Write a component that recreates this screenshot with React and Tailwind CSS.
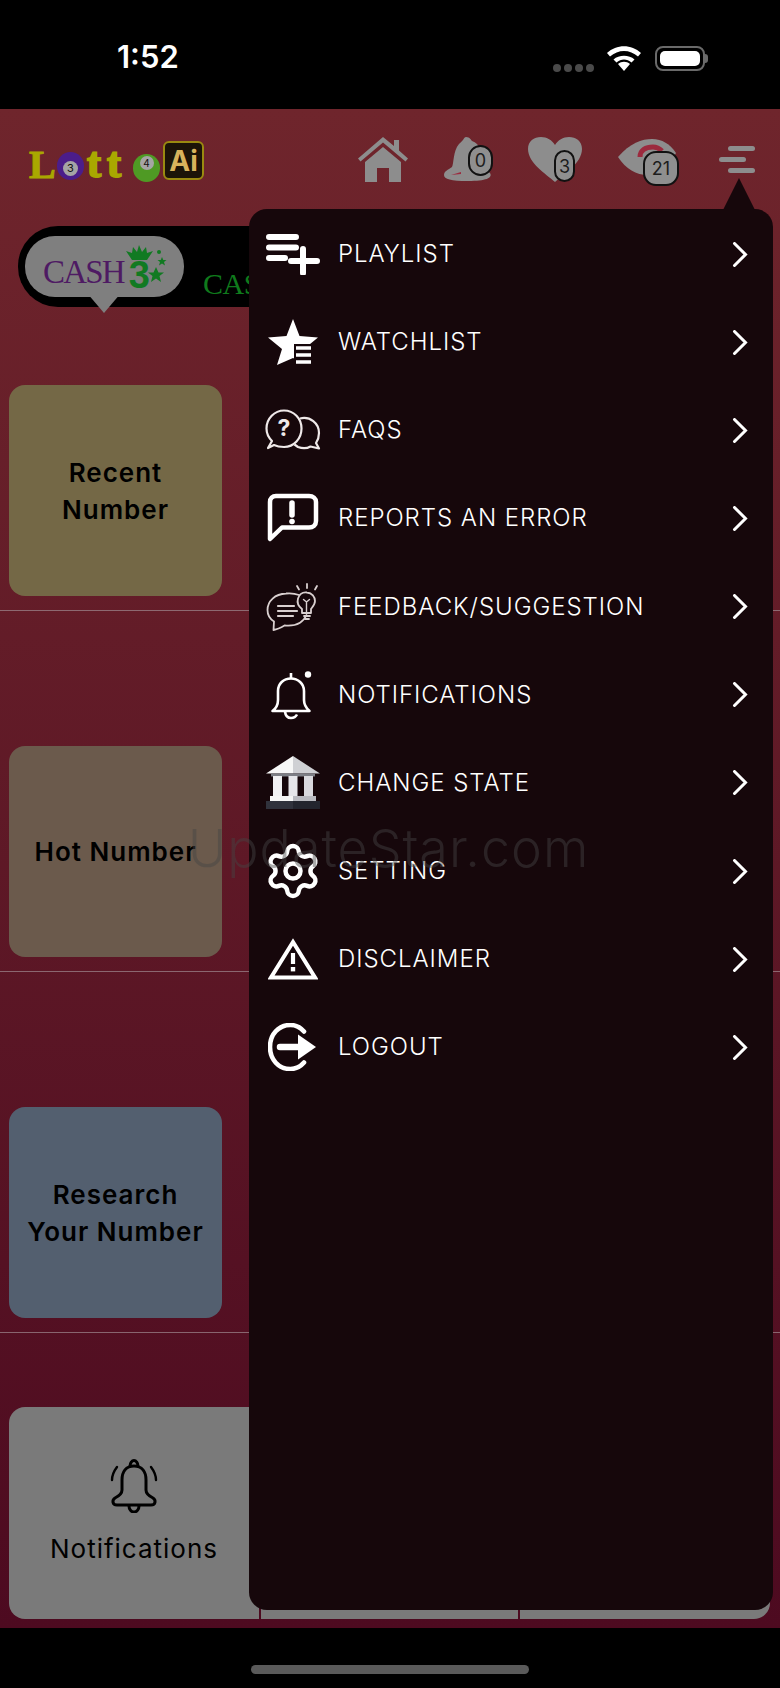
import { Settings } from "lucide-react";

const FONT = "font-['Inter','Noto_Sans',sans-serif]";

const PlaylistIcon = () => (
  <svg width="54" height="42" viewBox="0 0 54 42" fill="none" stroke="white" strokeLinecap="round">
    <path d="M3 4H30M3 14.500H30M3 25H19" strokeWidth="6" />
    <path d="M37 16V40M25 28H51" strokeWidth="6" />
  </svg>
);

const StarIcon = () => (
  <svg width="52" height="48" viewBox="0 0 52 48">
    <path d="M26 1L32.500 18L51 19.500L37 31L41 47L26 40L10 47L15 31L1 19.500L19.500 18Z" fill="white" />
    <rect x="27" y="26" width="25" height="22" fill="#16070b" />
    <path d="M29 30H44M29 37H44M29 44H44" stroke="white" strokeWidth="3.400" />
  </svg>
);

const FaqIcon = () => (
  <svg width="56" height="42" viewBox="0 0 56 42" fill="none" stroke="#efe9e9" strokeWidth="2.200" strokeLinejoin="round">
    <path d="M3 39L7 32C3 28 1.500 24 1.500 19.500C1.500 9.500 9.500 1.500 19 1.500C29 1.500 36.500 9.500 36.500 19.500C36.500 29.500 29 38 19 38C14 38 11 37 9 36Z" />
    <path d="M35 9.500C45 7 54 14 54 24C54 28 53 31 51 34L54 39.500L45.500 37.500C42 39.500 37 39.500 33 38L29.500 35.500" />
    <text x="19" y="27" textAnchor="middle" fontSize="23" fontWeight="700" fill="#efe9e9" stroke="none" fontFamily="Inter, sans-serif">?</text>
  </svg>
);

const ReportIcon = () => (
  <svg width="52" height="50" viewBox="0 0 52 50" fill="none">
    <path d="M3 46V9C3 5.500 5.500 3 9 3H42C46 3 49 5.500 49 9V28C49 32 46 34.500 42 34.500H15Z" stroke="white" strokeWidth="4.500" strokeLinejoin="round" />
    <path d="M25 10V22" stroke="white" strokeWidth="5.500" strokeLinecap="round" />
    <circle cx="25" cy="28.500" r="2.800" fill="white" />
  </svg>
);

const FeedbackIcon = () => (
  <svg width="54" height="50" viewBox="0 0 54 50" fill="none" stroke="#d9d0d0" strokeWidth="1.800" strokeLinecap="round" strokeLinejoin="round">
    <path d="M33 13C29 11.500 25 11 20 11.500C9 12 1.500 19 1.500 28C1.500 33 4 37 8 39.500L7.500 48C11 47.500 16 45 18.500 43.500C29 44.500 37 41 40.500 33" />
    <path d="M12 24H28M12 29H31M12 34H27" strokeWidth="2.200" />
    <path d="M42 31H36V27C32 24 31 20 32 16.500C33.500 12 37 10 41 10.500C46 11 49 15 49 19C49 22.500 46.500 25 45 27V31Z" />
    <path d="M38 34H44M39 37H43" />
    <path d="M40.500 30V20L37.500 17.500M40.500 20L43.500 17.500" strokeWidth="1.400" />
    <path d="M41 2V6M31 4L33 7.500M51 4L49 7.500" />
  </svg>
);

const NotifyIcon = () => (
  <svg width="44" height="50" viewBox="0 0 44 50" fill="none" stroke="white" strokeWidth="2.600" strokeLinejoin="round">
    <path d="M1.500 41C5.500 38 7 35 7 30V21C7 13.500 12.500 8.500 20 8.500C27 8.500 33 13.500 33 21V30C33 35 35 38 38.500 41Z" />
    <path d="M20 8.500V3" />
    <path d="M14 41.500C14.500 46 17 48 20 48C23 48 25 46.500 26 44.500" />
    <circle cx="37" cy="4.500" r="3.200" fill="white" stroke="none" />
  </svg>
);

const BankIcon = () => (
  <svg width="54" height="53" viewBox="0 0 54 53">
    <path d="M27 0L0 17.500H27Z" fill="#f7f7f7" />
    <path d="M27 0L54 17.500H27Z" fill="#cfd0d4" />
    <rect x="5" y="17.500" width="44" height="3" fill="#7d7f86" />
    <rect x="7" y="20" width="9" height="21" fill="#f1f1f3" />
    <rect x="22.500" y="20" width="9" height="21" fill="#e6e6ea" />
    <rect x="38" y="20" width="9" height="21" fill="#d9d9de" />
    <rect x="4" y="40" width="23" height="5" fill="#f5f5f5" />
    <rect x="27" y="40" width="23" height="5" fill="#b9bac0" />
    <rect x="0" y="45" width="27" height="8" fill="#30323c" />
    <rect x="27" y="45" width="27" height="8" fill="#23252e" />
  </svg>
);

const WarnIcon = () => (
  <svg width="50" height="42" viewBox="0 0 50 42" fill="none">
    <path d="M25 4L47 39.500H3Z" stroke="white" strokeWidth="4" strokeLinejoin="miter" />
    <path d="M25 15V26" stroke="white" strokeWidth="4.200" />
    <rect x="22.800" y="29" width="4.400" height="4.400" fill="white" />
  </svg>
);

const LogoutIcon = () => (
  <svg width="50" height="48" viewBox="0 0 50 48" fill="none">
    <path d="M36 8.500C32 4 27 2 22.500 2C10.500 2 2 11.500 2 24C2 36.500 10.500 46 22.500 46C27 46 32 44 36 39.500" stroke="white" strokeWidth="4.600" strokeLinecap="round" />
    <path d="M12 24H30" stroke="white" strokeWidth="6.500" strokeLinecap="round" />
    <path d="M30 11.500L48 24L30 36.500Z" fill="white" />
  </svg>
);

const menuItems = [
  { label: "PLAYLIST", icon: <PlaylistIcon /> },
  { label: "WATCHLIST", icon: <StarIcon /> },
  { label: "FAQS", icon: <FaqIcon /> },
  { label: "REPORTS AN ERROR", icon: <ReportIcon /> },
  { label: "FEEDBACK/SUGGESTION", icon: <FeedbackIcon /> },
  { label: "NOTIFICATIONS", icon: <NotifyIcon /> },
  { label: "CHANGE STATE", icon: <BankIcon /> },
  { label: "SETTING", icon: <Settings size={60} strokeWidth={1.800} color="white" /> },
  { label: "DISCLAIMER", icon: <WarnIcon /> },
  { label: "LOGOUT", icon: <LogoutIcon /> },
];

function StatusBar() {
  return (
    <div className="h-[109px] shrink-0 bg-black flex items-start relative">
      <span className="ml-[117px] mt-[38px] text-white text-[31px] leading-[38px] font-semibold">1:52</span>
      <div className="ml-auto mr-[72px] mt-[44px] flex items-center">
        <div className="flex gap-[3px] mt-[20px] mr-[12px]">
          <i className="w-[8px] h-[8px] rounded-full bg-[#4a4a4a]" />
          <i className="w-[8px] h-[8px] rounded-full bg-[#4a4a4a]" />
          <i className="w-[8px] h-[8px] rounded-full bg-[#4a4a4a]" />
          <i className="w-[8px] h-[8px] rounded-full bg-[#4a4a4a]" />
        </div>
        <svg width="36" height="26" viewBox="0 0 36 26">
          <path d="M18 26L12 19C15.500 16 20.500 16 24 19Z" fill="white" />
          <path d="M7.500 14.500C13 9.500 23 9.500 28.500 14.500L25.500 17.500C21 13.500 15 13.500 10.500 17.500Z" fill="white" />
          <path d="M1 8C10.500 -1 25.500 -1 35 8L32 11.500C24 4 12 4 4 11.500Z" fill="white" />
        </svg>
        <div className="ml-[13px] flex items-center">
          <div className="w-[50px] h-[25px] rounded-[8px] border-2 border-[#6a6a6a] p-[3px]">
            <div className="w-full h-full rounded-[5px] bg-white" />
          </div>
          <div className="w-[3px] h-[9px] rounded-r-full bg-[#6a6a6a]" />
        </div>
      </div>
    </div>
  );
}

function Badge({ text, className }) {
  return (
    <span className={`absolute flex items-center justify-center border-2 border-[#111] bg-[#8f8f8f] text-[#1d1d1d] text-[18px] ${className}`}>
      {text}
    </span>
  );
}

function Logo() {
  return (
    <div className="flex items-end h-[42px] w-[176px] mt-[3px] pl-[1px]">
      <span className="w-[26px] font-['Liberation_Serif',serif] font-bold text-[#a9a800] [-webkit-text-stroke:1px_#a9a800] text-[40px] leading-[34px]">L</span>
      <span className="ml-[2px] mb-[2px] w-[27px] h-[28px] rounded-full bg-[#4b1d8a] flex items-center justify-center shrink-0">
        <span className="w-[15px] h-[15px] mt-[5px] rounded-full bg-[#a5a5a5] text-[#111] text-[11px] leading-none flex items-center justify-center">3</span>
      </span>
      <span className="ml-[3px] w-[43px] font-['Liberation_Serif',serif] font-bold text-[#a9a800] [-webkit-text-stroke:2px_#a9a800] text-[42px] leading-[38px] tracking-[6px]">tt</span>
      <span className="ml-[3px] w-[27px] h-[28px] rounded-full bg-[#4f9a24] flex items-start justify-center shrink-0">
        <span className="mt-[2px] w-[14px] h-[14px] rounded-full bg-[#a5a5a5] text-[#111] text-[10px] leading-none flex items-center justify-center">4</span>
      </span>
      <span className="ml-[3px] mb-[2px] w-[41px] h-[39px] shrink-0 rounded-[6px] border-2 border-[#9a8a10] bg-[#1c1408] text-[#d8b35c] text-[28px] font-bold leading-none flex items-center justify-center">Ai</span>
    </div>
  );
}

function Header() {
  return (
    <div className="h-[117px] shrink-0 flex items-start pl-[28px] pr-[25px] pt-[28px]">
      <Logo />

      {/* top icons */}
      <div className="ml-auto flex items-start">
        <svg width="50" height="45" viewBox="0 0 50 45" fill="#8d8d8d">
          <path d="M25 0L36 9V3H41V13.500L50 21.500L47.500 24.500L25 5.500L2.500 24.500L0 21.500Z" />
          <path d="M7 25L25 10L43 25V45H31V31H19V45H7Z" />
        </svg>
        <div className="relative w-[49px] h-[45px] ml-[36px]">
          <svg width="49" height="45" viewBox="0 0 49 45" fill="#8d8d8d">
            <path d="M22 0C26 0 27 3 28 4C36 7 38 14 38 22C38 30 42 33 46 36C49 41 42 44 24 44C7 44 0 42 0 38C0 34 4 33 8 30C10 26 9 14 15 7C17 5 18 4 19 3C20 1 21 0 22 0Z" />
            <path d="M7 38L17 35V37Z" fill="#9c2a3e" />
          </svg>
          <Badge text="0" className="left-[24px] top-[8px] w-[25px] h-[31px] rounded-full" />
        </div>
        <div className="relative w-[54px] h-[45px] ml-[35px]">
          <svg width="54" height="45" viewBox="0 0 54 45" fill="#8d8d8d">
            <path d="M27 45C18 37 0 26 0 12C0 4 6 0 13 0C19 0 24 3 27 8C30 3 35 0 41 0C48 0 54 4 54 12C54 26 36 37 27 45Z" />
          </svg>
          <Badge text="3" className="left-[26px] top-[13px] w-[21px] h-[32px] rounded-full" />
        </div>
        <div className="relative w-[58px] h-[45px] ml-[36px]">
          <svg width="58" height="45" viewBox="0 0 58 45" fill="none">
            <path d="M0 20C12 6 24 2 34 2C44 2 52 7 58 16C50 32 40 38 30 38C18 38 8 32 0 20Z" fill="#8d8d8d" />
            <path d="M22 20C22 13 28 10 35 10C39 10 42 12 44 14" stroke="#9c2a3e" strokeWidth="5" fill="none" />
            <circle cx="34" cy="21" r="5" fill="#9c2a3e" />
          </svg>
          <Badge text="21" className="left-[25px] top-[14px] w-[36px] h-[35px] rounded-[13px]" />
        </div>
        <div className="ml-[43px] mt-[9px] w-[36px] flex flex-col gap-[6px]">
          <i className="self-end w-[27px] h-[5px] rounded-full bg-[#8d8d8d]" />
          <i className="self-start w-[27px] h-[5px] rounded-full bg-[#8d8d8d]" />
          <i className="self-end w-[27px] h-[5px] rounded-full bg-[#8d8d8d]" />
        </div>
      </div>
    </div>
  );
}

function TabBar() {
  return (
    <div className="mx-[18px] h-[81px] shrink-0 rounded-[40px] bg-black flex items-start pl-[7px] pt-[10px] overflow-visible">
      <div className="relative w-[159px] h-[61px] rounded-[30px] bg-[#7f7f7f] flex items-center pl-[18px] shrink-0">
        <span className="font-['Liberation_Serif',serif] text-[#4e1a63] text-[33px] leading-none tracking-[-1.800px] mt-[12px]">CASH</span>
        <span className="font-['Liberation_Sans',sans-serif] font-bold text-[#117a22] text-[38px] leading-none mt-[16px] ml-[5px]">3</span>
        {/* crown and stars of the cash 3 logo */}
        <svg className="absolute left-[100px] top-[9px]" width="42" height="46" viewBox="0 0 42 46" fill="#117a22">
          <path d="M1 6L7 8L8 2L12 7L14 0L17 7L21 2L22 8L28 6L22 15H7Z" />
          <path d="M31 22L33.500 27.500H39L34.500 31L36 37L31 33.500L26 37L27.500 31L23 27.500H28.500Z" />
          <path d="M37 12L38.300 15H41.500L39 17L40 20.500L37 18.500L34 20.500L35 17L32.500 15H35.700Z" />
          <circle cx="34" cy="7" r="2" />
        </svg>
        <div className="absolute left-[62px] top-[57px] w-0 h-0 border-l-[17px] border-r-[17px] border-t-[20px] border-l-transparent border-r-transparent border-t-[#7f7f7f]" />
      </div>
      <span className="ml-[19px] mt-[31px] font-['Liberation_Serif',serif] text-[#0f7a1c] text-[30px] leading-[34px] tracking-[-0.500px]">CASH</span>
    </div>
  );
}

function RowCard({ bg, lines }) {
  return (
    <div className="border-b border-[#a08a90]/70 pb-[14px] pl-[9px] mt-[-1px]">
      <div className={`w-[213px] h-[211px] rounded-[16px] ${bg} flex flex-col items-center justify-center text-black text-[26px] leading-[37px] font-semibold tracking-[1px] whitespace-nowrap`}>
        {lines.map((l) => (
          <span key={l}>{l}</span>
        ))}
      </div>
    </div>
  );
}

function BellOutline() {
  return (
    <svg width="50" height="54" viewBox="0 0 50 54" fill="none" stroke="black" strokeWidth="3" strokeLinecap="round" strokeLinejoin="round">
      <path d="M25 7C17 7 13 13 13 21V31C13 35 10 37 6 39C3 41 3 46 8 46H42C47 46 47 41 44 39C40 37 37 35 37 31V21C37 13 33 7 25 7Z" />
      <path d="M21 7C21 4 23 1.500 25 1.500C27 1.500 29 4 29 7" />
      <path d="M20 47C20 50 22 53 25 53C28 53 30 50 30 47" />
      <path d="M3 21C3 16 5 12 8 8M47 21C47 16 45 12 42 8" strokeWidth="2.400" />
    </svg>
  );
}

function BottomRow() {
  return (
    <div className="flex mt-[74px] pl-[9px] pr-[10px] gap-[2px] h-[212px] shrink-0">
      <div className="w-[250px] rounded-l-[16px] bg-[#7a7a7a] flex flex-col items-center pt-[52px]">
        <BellOutline />
        <span className="mt-[20px] text-black text-[26px] leading-[32px] tracking-[1px]">Notifications</span>
      </div>
      <div className="w-[257px] bg-[#7a7a7a]" />
      <div className="flex-1 rounded-br-[16px] bg-[#7a7a7a]" />
    </div>
  );
}

function PopupMenu() {
  return (
    <div className="absolute left-[249px] top-[209px] w-[524px] h-[1401px] pt-[1px] rounded-[18px] bg-[#16070b]">
      {/* pointer up to the hamburger */}
      <div className="absolute right-[18px] top-[-31px] w-0 h-0 border-l-[16px] border-r-[16px] border-b-[32px] border-l-transparent border-r-transparent border-b-[#16070b]" />
      {menuItems.map((item) => (
        <div key={item.label} className="h-[88.15px] flex items-center">
          <div className="w-[87px] flex justify-center shrink-0">{item.icon}</div>
          <span className="ml-[2px] text-white text-[24px] leading-[30px] font-light tracking-[0.950px]">{item.label}</span>
          <svg className="ml-auto mr-[25px]" width="16" height="25" viewBox="0 0 16 25" fill="none" stroke="white" strokeWidth="3" strokeLinecap="round" strokeLinejoin="miter">
            <path d="M2.500 1.500L13.500 12.500L2.500 23.500" />
          </svg>
        </div>
      ))}
    </div>
  );
}

export default function App() {
  return (
    <div className={`${FONT} relative w-[780px] h-[1688px] overflow-hidden bg-black flex flex-col`}>
      <StatusBar />
      <div className="flex-1 flex flex-col bg-linear-to-b from-[#6f252c] to-[#4d0a20] overflow-hidden">
        <Header />
        <TabBar />
        <div className="mt-[79px]">
          <RowCard bg="bg-[#746846]" lines={["Recent", "Number"]} />
        </div>
        <div className="mt-[136px]">
          <RowCard bg="bg-[#6b5a4c]" lines={["Hot Number"]} />
        </div>
        <div className="mt-[136px]">
          <RowCard bg="bg-[#535f6f]" lines={["Research", "Your Number"]} />
        </div>
        <BottomRow />
      </div>
      <div className="h-[60px] shrink-0 bg-black flex justify-center pt-[37px]">
        <div className="w-[278px] h-[9px] rounded-full bg-[#5a5a5a]" />
      </div>
      <PopupMenu />
      {/* watermark sits over everything */}
      <span className="absolute left-[188px] top-[817px] text-[52px] leading-[64px] font-light tracking-[1px] text-[#444444]/45 pointer-events-none">
        UpdateStar.com
      </span>
    </div>
  );
}
